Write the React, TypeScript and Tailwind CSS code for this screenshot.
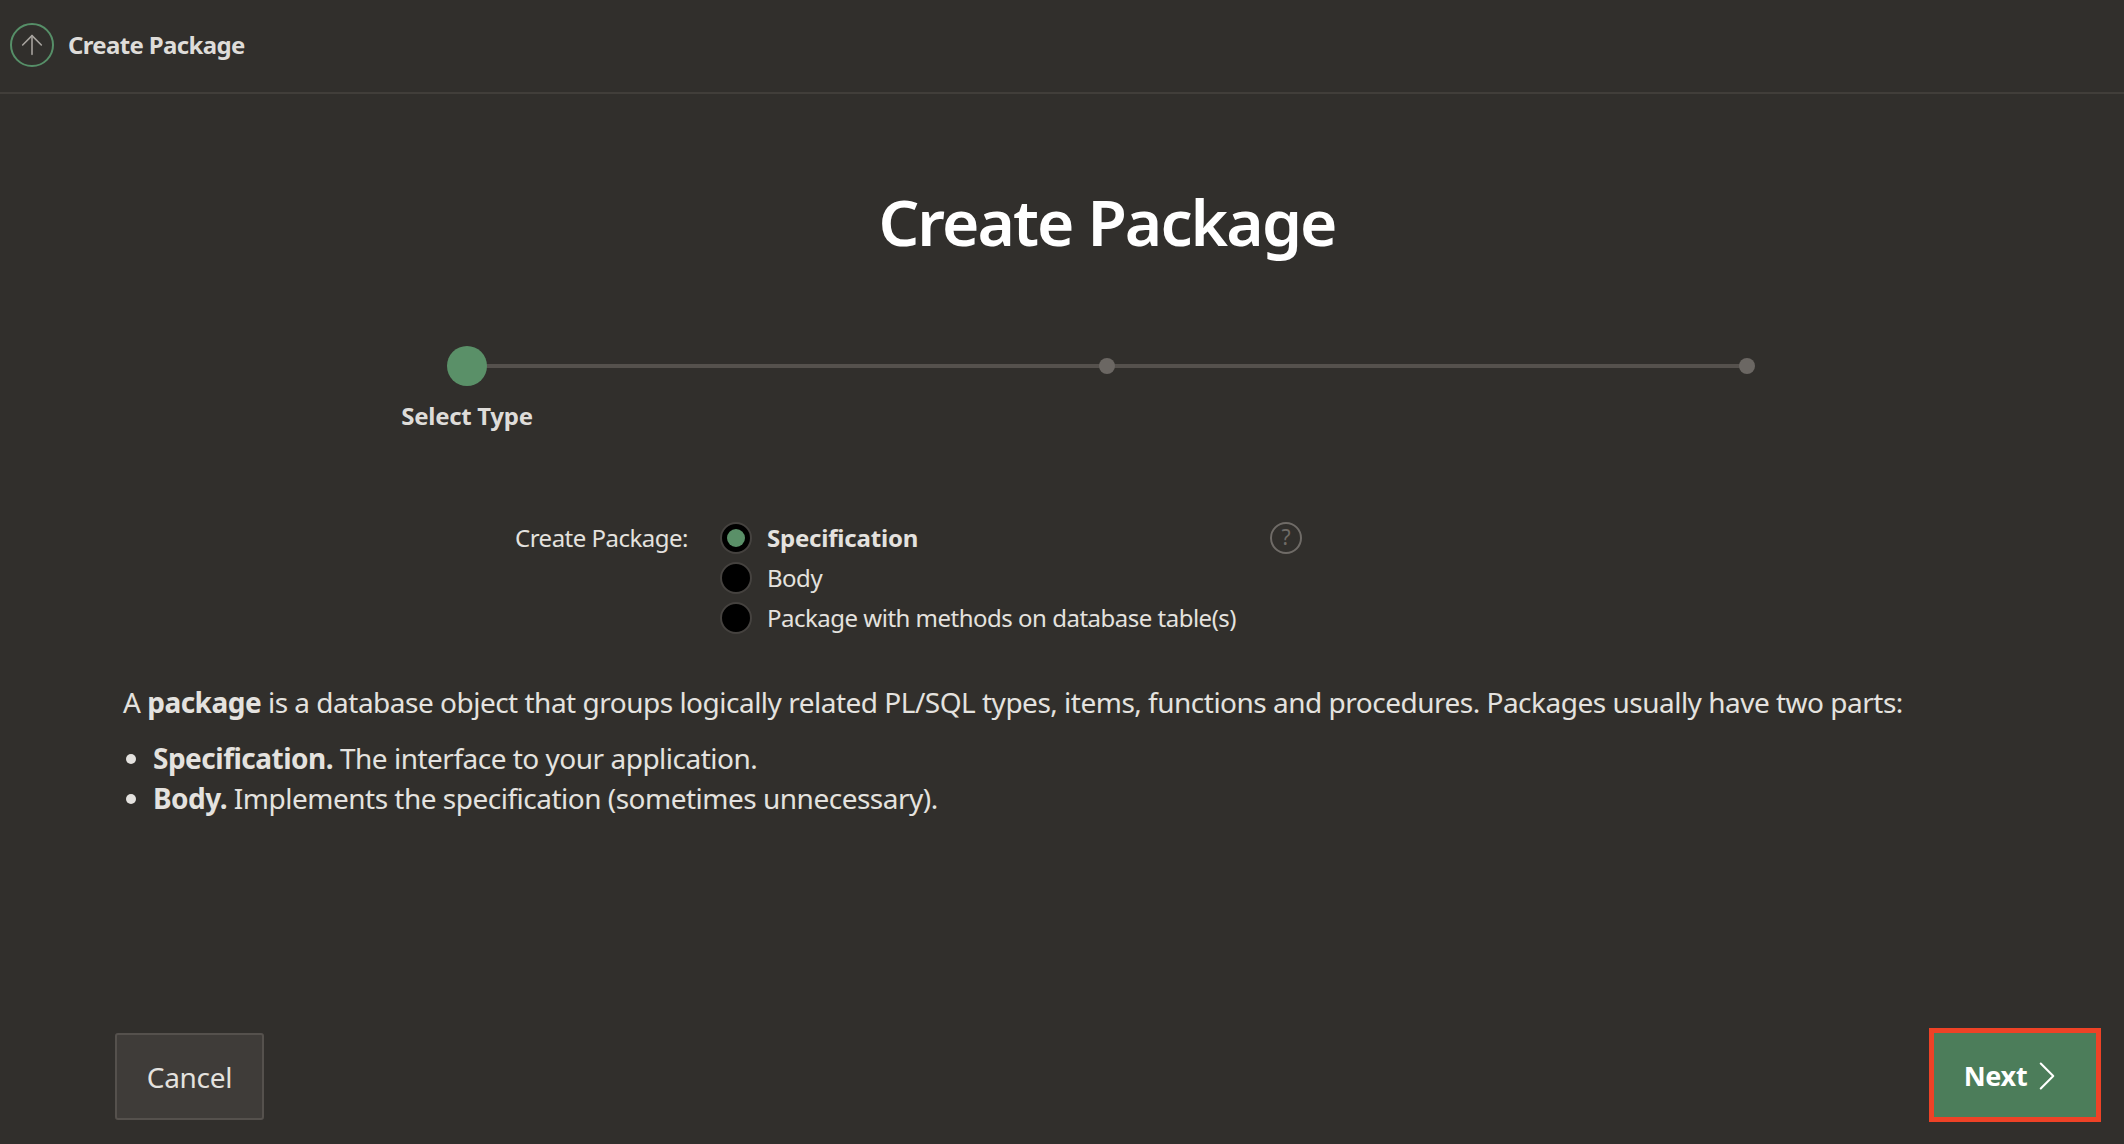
import React from "react";
import { ArrowUp, ChevronRight } from "lucide-react";

const options = [
  { label: "Specification", checked: true },
  { label: "Body", checked: false },
  { label: "Package with methods on database table(s)", checked: false },
];

const Radio = ({ label, checked }: { label: string; checked: boolean }) => (
  <div className="flex h-10 items-center">
    <span className="flex h-[32px] w-[32px] items-center justify-center rounded-full border-2 border-[#45423f] bg-black">
      {checked && <span className="h-[18px] w-[18px] rounded-full bg-[#5a9068]" />}
    </span>
    <span className={`ml-[15px] text-[24px] whitespace-nowrap text-[#e4e2df] ${checked ? "font-bold tracking-[-0.2px]" : "tracking-[-0.5px]"}`}>
      {label}
    </span>
  </div>
);

const App = () => {
  return (
    <div className="flex h-[1144px] w-[2124px] flex-col overflow-hidden bg-[#312f2c] font-['Noto_Sans',sans-serif] text-[#e4e2df]">
      <header className="flex h-[94px] shrink-0 items-center border-b-2 border-[#413e3a] pb-[3px] pl-[10px]">
        <span className="flex h-[44px] w-[44px] items-center justify-center rounded-full border-2 border-[#568f68] text-[#a7a39e]">
          <ArrowUp size={32} strokeWidth={1.2} />
        </span>
        <span className="ml-[14px] text-[24px] font-bold tracking-[-0.65px] text-[#dedcd9]">Create Package</span>
      </header>

      <h1 className="mt-[84px] pl-[90px] text-center text-[64px] leading-[88px] font-semibold tracking-[-1.9px] text-white">
        Create Package
      </h1>

      <div className="relative mt-[80px] ml-[447px] h-[40px] w-[1308px]">
        <div className="absolute top-[18px] left-[20px] h-[4px] w-[1280px] bg-[#55514d]" />
        <span className="absolute top-0 left-0 h-[40px] w-[40px] rounded-full bg-[#5a9068]" />
        <span className="absolute top-[12px] left-[652px] h-[16px] w-[16px] rounded-full bg-[#6b6763]" />
        <span className="absolute top-[12px] left-[1292px] h-[16px] w-[16px] rounded-full bg-[#6b6763]" />
        <span className="absolute top-[52px] left-[20px] -translate-x-1/2 text-[24px] font-bold tracking-[-0.3px] whitespace-nowrap text-[#dedcd9]">
          Select Type
        </span>
      </div>

      <div className="mt-[132px] flex items-start pl-[515px]">
        <label className="flex h-10 w-[173px] items-center text-[24px] tracking-[-0.5px] whitespace-nowrap">Create Package:</label>
        <div className="ml-[32px] w-[550px]">
          {options.map((o) => (
            <Radio key={o.label} label={o.label} checked={o.checked} />
          ))}
        </div>
        <span className="mt-[4px] flex h-[32px] w-[32px] items-center justify-center rounded-full border-2 border-[#6f6b67] text-[21px] text-[#6f6b67]">
          ?
        </span>
      </div>

      <div className="mt-[44px] pl-[123px] text-[28px] tracking-[-0.5px]">
        <p className="leading-[40px]">
          A <b>package</b> is a database object that groups logically related PL/SQL types, items, functions and procedures. Packages usually have two parts:
        </p>
        <ul className="mt-[16px] list-disc pl-[30px] leading-[40px]">
          <li><b>Specification.</b> The interface to your application.</li>
          <li><b>Body.</b> Implements the specification (sometimes unnecessary).</li>
        </ul>
      </div>

      <footer className="mt-auto mb-[22px] flex items-center justify-between pr-[23px] pl-[115px]">
        <button className="mt-[2px] h-[87px] w-[149px] rounded-[3px] border-2 border-[#55514d] bg-[#3f3c39] pt-[1px] text-[28px] tracking-[-0.3px] text-[#e4e2df]">
          Cancel
        </button>
        <button className="flex h-[94px] w-[172px] items-center justify-center border-[5px] border-[#ee4226] bg-[#4c7d5a] pt-[2px] pr-[4px] text-[27px] font-bold tracking-[-0.3px] text-white">
          Next
          <ChevronRight size={50} strokeWidth={1} className="-mr-[10px] ml-[-5px]" />
        </button>
      </footer>
    </div>
  );
};

export default App;
